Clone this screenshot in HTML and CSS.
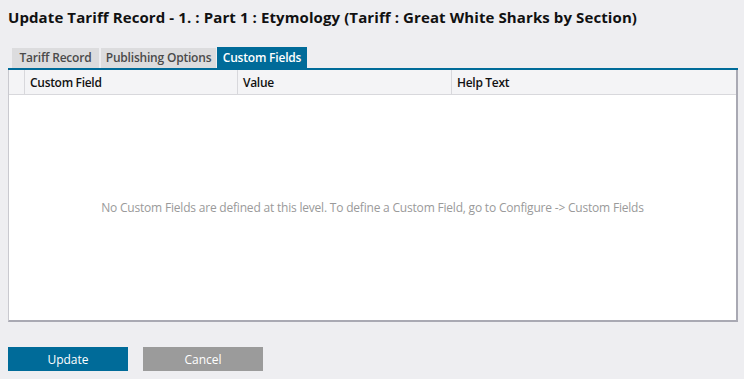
FILE: index.html
```html
<!DOCTYPE html>
<html lang="en">
<head>
  <meta charset="UTF-8" />
  <title>Update Tariff Record</title>
  <link rel="stylesheet" href="styles.css">
</head>
<body>
  <div class="page">
    <h1 class="title">Update Tariff Record - 1. : Part 1 : Etymology (Tariff : Great White Sharks by Section)</h1>

    <div class="tabs">
      <div class="tab tab-record">Tariff Record</div>
      <div class="tab tab-publish">Publishing Options</div>
      <div class="tab tab-custom active">Custom Fields</div>
    </div>

    <div class="grid">
      <div class="grid-head">
        <div class="cell cell-sel"></div>
        <div class="cell cell-field">Custom Field</div>
        <div class="cell cell-value">Value</div>
        <div class="cell cell-help">Help Text</div>
      </div>
      <div class="grid-body">
        <p class="empty">No Custom Fields are defined at this level. To define a Custom Field, go to Configure -&gt; Custom Fields</p>
      </div>
    </div>

    <div class="actions">
      <button class="btn btn-update">Update</button>
      <button class="btn btn-cancel">Cancel</button>
    </div>
  </div>
</body>
</html>
```

FILE: styles.css
```css
html, body {
  margin: 0;
  background-color: #eeeef1;
}

body {
  font-family: "Open Sans", "Noto Sans", sans-serif;
  color: #111;
}

.page {
  padding: 6px 6px 0 8px;
}

.title {
  font-size: 15px;
  font-weight: 700;
  margin: 0;
  height: 22px;
  line-height: 22px;
  letter-spacing: 0.1px;
}

.tabs {
  display: flex;
  align-items: flex-end;
  gap: 2px;
  margin-top: 19px;
  padding-left: 4px;
  height: 21px;
  border-bottom: 2px solid #006b99;
}

.tab {
  background-color: #dcdcde;
  color: #4a4a4a;
  font-size: 12px;
  font-weight: 600;
  height: 20px;
  line-height: 20px;
  text-align: center;
  letter-spacing: -0.2px;
}

.tab-record {
  width: 87px;
}

.tab-publish {
  width: 115px;
}

.tab-custom {
  width: 90px;
  margin-left: -1px;
}

.tab.active {
  background-color: #006b99;
  color: #fff;
  height: 21px;
  line-height: 21px;
}

.grid {
  background-color: #fff;
  border-left: 1px solid #c9c9cf;
  border-right: 2px solid #a9a9b3;
  border-bottom: 2px solid #a9a9b3;
  height: 250px;
  display: flex;
  flex-direction: column;
}

.grid-head {
  display: flex;
  height: 24px;
  background-color: #f4f4f6;
  border-bottom: 1px solid #d8d8dc;
}

.cell {
  font-size: 12px;
  font-weight: 600;
  line-height: 24px;
  padding: 1px 0 0 5px;
  border-right: 1px solid #d8d8dc;
  letter-spacing: -0.3px;
}

.cell-sel {
  width: 11px;
  padding-left: 4px;
}

.cell-field {
  width: 207px;
}

.cell-value {
  width: 208px;
}

.cell-help {
  flex: 1;
  border-right: 0;
}

.grid-body {
  flex: 1;
  display: flex;
  align-items: center;
  justify-content: center;
}

.empty {
  margin: 0;
  font-size: 12px;
  color: #9a9a9a;
  letter-spacing: -0.2px;
}

.actions {
  display: flex;
  gap: 15px;
  margin-top: 25px;
}

.btn {
  width: 120px;
  height: 24px;
  border: none;
  color: #fff;
  font-family: "Open Sans", "Noto Sans", sans-serif;
  font-size: 12px;
  padding: 0;
}

.btn-update {
  background-color: #006b99;
}

.btn-cancel {
  background-color: #9b9b9b;
}
```
